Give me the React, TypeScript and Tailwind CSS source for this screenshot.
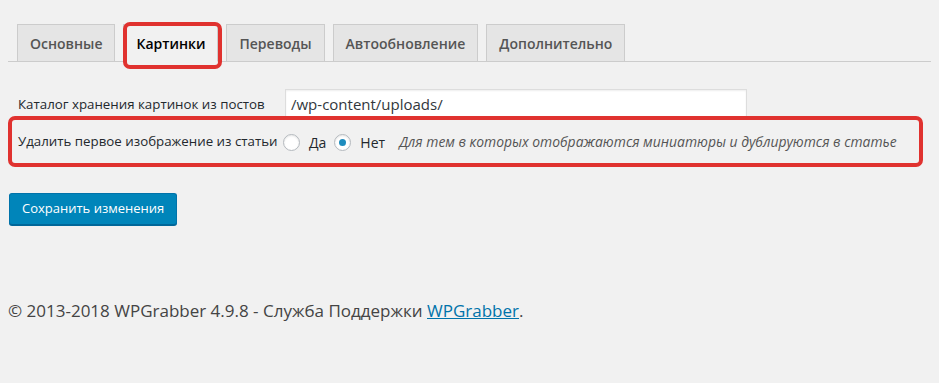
import React from "react";

const tabs = ["Основные", "Картинки", "Переводы", "Автообновление", "Дополнительно"];

export default function App() {
  return (
    <div
      className="relative w-[939px] h-[383px] bg-[#f1f1f1] text-[#444] overflow-hidden"
      style={{ fontFamily: '"Open Sans", "Noto Sans", sans-serif' }}
    >
      {/* Tabs */}
      <div className="pt-[24px] mx-[8px] border-b border-[#ccc] flex gap-[8px] pl-[9px]">
        {tabs.map((t, i) => (
          <div
            key={t}
            className={
              i === 1
                ? "h-[38px] -mb-px px-[12px] flex items-center border border-[#ccc] border-b-[#f1f1f1] bg-[#f1f1f1] text-[#000] text-[14px] font-semibold"
                : "h-[38px] -mb-px px-[12px] flex items-center border border-[#ccc] bg-[#e5e5e5] text-[#555] text-[14px] font-semibold"
            }
          >
            {t}
          </div>
        ))}
      </div>

      {/* Form */}
      <div className="pt-[27px] text-[13.3px] text-[#23282d]">
        <div className="flex items-center h-[28px]">
          <div className="w-[285px] pl-[18px] pt-[4px]">Каталог хранения картинок из постов</div>
          <div className="w-[462px] h-[28px] bg-white border border-[#ddd] shadow-[inset_0_1px_2px_rgba(0,0,0,0.07)] flex items-center px-[5px] pt-[2px] text-[15px] text-[#32373c]">
            /wp-content/uploads/
          </div>
        </div>
        <div className="flex items-center h-[48px] pt-[2px]">
          <div className="w-[283px] pl-[18px]">Удалить первое изображение из статьи</div>
          <label className="flex items-center">
            <span className="w-[17px] h-[17px] rounded-full bg-white border border-[#b4b9be] shadow-[inset_0_1px_2px_rgba(0,0,0,0.1)]" />
            <span className="ml-[9px] text-[14px]">Да</span>
          </label>
          <label className="flex items-center ml-[8px]">
            <span className="w-[17px] h-[17px] rounded-full bg-white border border-[#b4b9be] shadow-[inset_0_1px_2px_rgba(0,0,0,0.1)] flex items-center justify-center">
              <span className="w-[7px] h-[7px] rounded-full bg-[#1e8cbe]" />
            </span>
            <span className="ml-[9px] text-[14px]">Нет</span>
          </label>
          <div className="ml-[14px] italic text-[#555] text-[13.9px]">
            Для тем в которых отображаются миниатюры и дублируются в статье
          </div>
        </div>
      </div>

      {/* Save button */}
      <div className="pl-[9px] pt-[28px]">
        <button className="h-[32px] px-[12px] rounded-[3px] bg-[#0085ba] border border-[#0073aa] border-b-[#006799] text-white text-[13px] shadow-[0_1px_0_#006799]">
          Сохранить изменения
        </button>
      </div>

      {/* Footer */}
      <div className="pl-[8px] pt-[73px] text-[17px] text-[#444]">
        © 2013-2018 WPGrabber 4.9.8 - Служба Поддержки{" "}
        <span className="text-[#0073aa] underline">WPGrabber</span>.
      </div>

      {/* Annotation boxes */}
      <div className="absolute left-[123px] top-[22px] w-[99px] h-[47px] border-[4px] border-[#e0322f] rounded-[7px] pointer-events-none" />
      <div className="absolute left-[8px] top-[116px] w-[915px] h-[51px] border-[4px] border-[#e0322f] rounded-[7px] pointer-events-none" />
    </div>
  );
}
